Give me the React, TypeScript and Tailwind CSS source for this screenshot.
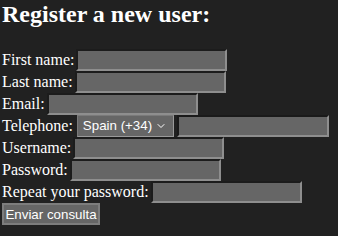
import { ChevronDown } from 'lucide-react';

const serif = { fontFamily: '"Liberation Serif", "Times New Roman", serif' };
const sans = { fontFamily: '"Liberation Sans", Arial, sans-serif' };

function Field({ label }: { label: string }) {
  return (
    <div className="flex h-[22px] items-center gap-[2px]">
      <span className="text-[16px] leading-[18px]">{label}</span>
      <input
        type="text"
        className="h-[22px] w-[151px] border-2 border-t-[#1c1c1c] border-l-[#1c1c1c] border-b-[#8e8e8e] border-r-[#8e8e8e] bg-[#666] outline-none"
      />
    </div>
  );
}

export default function App() {
  return (
    <div className="min-h-screen bg-[#212121] pl-[2px] text-white" style={serif}>
      <h2 className="mb-[21px] text-[24px] font-bold leading-[28px]">Register a new user:</h2>

      <form className="flex flex-col" onSubmit={(e) => e.preventDefault()}>
        <Field label="First name:" />
        <Field label="Last name:" />
        <Field label="Email:" />

        {/* phone row: country select + number */}
        <div className="flex h-[22px] items-center gap-[4px]">
          <span className="text-[16px] leading-[18px]">Telephone:</span>
          <div
            className="flex h-[22px] w-[97px] items-center justify-between border border-t-[#7a7a7a] border-l-[#7a7a7a] border-b-[#9a9a9a] border-r-[#9a9a9a] bg-[#666] pl-[5px] pr-[6px] text-[13.33px]"
            style={sans}
          >
            <span>Spain (+34)</span>
            <ChevronDown size={12} strokeWidth={2} />
          </div>
          <input
            type="tel"
            className="-ml-[1px] h-[22px] w-[152px] border-2 border-t-[#1a1a1a] border-l-[#1a1a1a] border-b-[#8e8e8e] border-r-[#8e8e8e] bg-[#666] outline-none"
          />
        </div>

        <Field label="Username:" />
        <Field label="Password:" />
        <Field label="Repeat your password:" />

        <div className="flex h-[22px] items-center">
          <button
            type="submit"
            className="h-[22px] w-[98px] border-2 border-[#7d7d7d] bg-[#666] text-[13.33px] text-white"
            style={sans}
          >
            Enviar consulta
          </button>
        </div>
      </form>
    </div>
  );
}
